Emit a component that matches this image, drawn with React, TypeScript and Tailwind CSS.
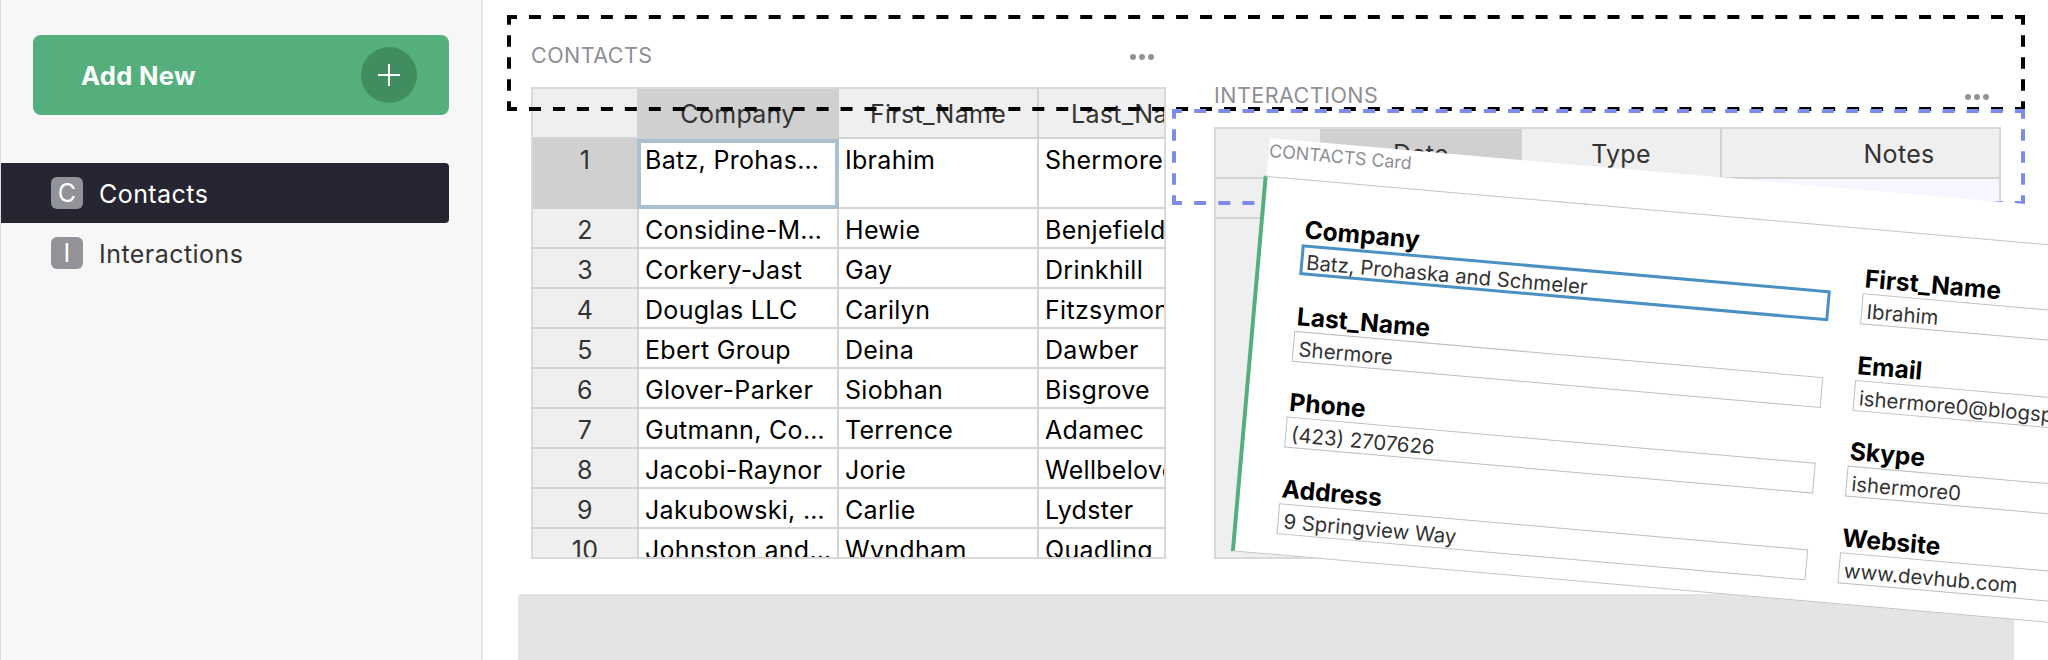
import React from "react";

type Contact = [string, string, string];

const contacts: Contact[] = [
  ["Batz, Prohas…", "Ibrahim", "Shermore"],
  ["Considine-M…", "Hewie", "Benjefield"],
  ["Corkery-Jast", "Gay", "Drinkhill"],
  ["Douglas LLC", "Carilyn", "Fitzsymons"],
  ["Ebert Group", "Deina", "Dawber"],
  ["Glover-Parker", "Siobhan", "Bisgrove"],
  ["Gutmann, Co…", "Terrence", "Adamec"],
  ["Jacobi-Raynor", "Jorie", "Wellbelove"],
  ["Jakubowski, …", "Carlie", "Lydster"],
  ["Johnston and…", "Wyndham", "Quadling"],
];

const fields: [string, string][] = [
  ["Company", "Batz, Prohaska and Schmeler"],
  ["First_Name", "Ibrahim"],
  ["Last_Name", "Shermore"],
  ["Email", "ishermore0@blogspot.com"],
  ["Phone", "(423) 2707626"],
  ["Skype", "ishermore0"],
  ["Address", "9 Springview Way"],
  ["Website", "www.devhub.com"],
];

function Dots() {
  return (
    <svg className="mt-1" width="24" height="6" viewBox="0 0 24 6" fill="#929299">
      <circle cx="3" cy="3" r="3" />
      <circle cx="12" cy="3" r="3" />
      <circle cx="21" cy="3" r="3" />
    </svg>
  );
}

function DashedFrame({ width, color, gap, className }: { width: number; color: string; gap: number; className: string }) {
  const h = `12 ${gap}`;
  return (
    <svg className={className} width={width} height="96" viewBox={`0 0 ${width} 96`} stroke={color} strokeWidth="4" fill="none">
      <path d={`M0 2H${width}`} strokeDasharray={h} strokeDashoffset="2" />
      <path d={`M0 94H${width}`} strokeDasharray={h} strokeDashoffset="2" />
      <path d="M2 0V96" strokeDasharray="11.5 10.5" strokeDashoffset="1.7" />
      <path d={`M${width - 2} 0V96`} strokeDasharray="11.5 10.5" strokeDashoffset="1.7" />
    </svg>
  );
}

function Sidebar() {
  return (
    <aside className="flex h-full w-[483px] shrink-0 flex-col border-l border-r-2 border-l-[#dcdcdc] border-r-[#e6e6e6] bg-[#f7f7f7] pt-[35px]">
      <button className="ml-8 flex h-20 w-[416px] items-center justify-between rounded-lg bg-[#54af7d] pr-8 pl-[48px] text-white">
        <span className="pt-[2px] text-[25.5px] font-bold tracking-[0.35px]">Add New</span>
        <span className="flex size-14 items-center justify-center rounded-full bg-[#408e5f]">
          <svg width="22" height="22" viewBox="0 0 22 22" stroke="white" strokeWidth="2">
            <path d="M11 0V22M0 11H22" />
          </svg>
        </span>
      </button>
      <nav className="mt-12 flex flex-col text-[25px] tracking-[0.45px]">
        <a className="flex h-[60px] w-[448px] items-center rounded-r bg-[#262632] pl-[50px] text-white">
          <span className="flex size-8 items-center justify-center rounded-md bg-[#929299] pt-[2px]">C</span>
          <span className="pt-[3px] pl-4">Contacts</span>
        </a>
        <a className="flex h-[60px] w-[448px] items-center pl-[50px] text-[#333]">
          <span className="flex size-8 items-center justify-center rounded-md bg-[#929299] pt-[2px] text-white">I</span>
          <span className="pt-[3px] pl-4">Interactions</span>
        </a>
      </nav>
    </aside>
  );
}

function ContactsTable() {
  return (
    <section className="flex w-[635px] flex-col">
      <header className="flex h-[87px] items-center justify-between pt-[24px] pb-[1px] pr-[12px]">
        <h2 className="text-[21.5px] leading-8 tracking-[0.45px] text-[#8e8e95]">CONTACTS</h2>
        <Dots />
      </header>
      <div className="h-[472px] overflow-hidden border-2 border-[#d9d9d9] text-[25px] tracking-[0.3px]">
        <div className="grid w-[704px] grid-cols-[106px_200px_200px_198px]">
          <div className="h-[50px] border-r-2 border-b-2 border-[#d3d3d3] bg-[#efefef]" />
          <div className="h-[50px] border-r-2 border-b-2 border-[#d0d0d0] bg-[#d0d0d0] pt-px text-center leading-[48px] text-[#333]">Company</div>
          <div className="h-[50px] border-r-2 border-b-2 border-[#d3d3d3] bg-[#efefef] pt-px text-center leading-[48px] text-[#333]">First_Name</div>
          <div className="h-[50px] border-b-2 border-[#d3d3d3] bg-[#efefef] pt-px text-center leading-[48px] text-[#333]">Last_Name</div>
          {contacts.map(([company, first, last], i) => (
            <React.Fragment key={company}>
              <div
                className={
                  i === 0
                    ? "h-[70px] border-r-2 border-b-2 border-[#d0d0d0] bg-[#d0d0d0] text-center leading-[43px] text-[#333]"
                    : "h-10 border-r-2 border-b-2 border-[#d3d3d3] bg-[#efefef] text-center leading-[42px] text-[#333]"
                }
              >
                {i + 1}
              </div>
              <div
                className={
                  i === 0
                    ? "-ml-0.5 h-[70px] border-4 border-[#a9c0d1] pl-1 leading-[35px] whitespace-nowrap"
                    : "h-10 border-r-2 border-b-2 border-[#d3d3d3] pl-1.5 leading-[42px] whitespace-nowrap"
                }
              >
                {company}
              </div>
              <div className={i === 0 ? "h-[70px] border-r-2 border-b-2 border-[#d3d3d3] pl-1.5 leading-[43px]" : "h-10 border-r-2 border-b-2 border-[#d3d3d3] pl-1.5 leading-[42px]"}>
                {first}
              </div>
              <div className={i === 0 ? "h-[70px] border-b-2 border-[#d3d3d3] pl-1.5 leading-[43px]" : "h-10 border-b-2 border-[#d3d3d3] pl-1.5 leading-[42px]"}>
                {last}
              </div>
            </React.Fragment>
          ))}
        </div>
      </div>
    </section>
  );
}

function InteractionsTable() {
  return (
    <section className="flex w-[787px] flex-col">
      <header className="flex h-[127px] items-center justify-between pt-[64px] pb-[1px] pr-[12px]">
        <h2 className="text-[21.5px] leading-8 tracking-[0.48px] text-[#8e8e95]">INTERACTIONS</h2>
        <Dots />
      </header>
      <div className="h-[432px] overflow-hidden border-2 border-[#d9d9d9] bg-[#efefef] text-[25px] tracking-[0.3px] text-[#333]">
        <div className="grid w-[860px] grid-cols-[104px_202px_200px_354px] text-center leading-[50px]">
          <div className="h-[50px] border-b-2 border-[#d3d3d3]" />
          <div className="h-[50px] bg-[#d0d0d0]">Date</div>
          <div className="h-[50px] border-r-2 border-b-2 border-[#d3d3d3]">Type</div>
          <div className="h-[50px] border-b-2 border-[#d3d3d3]">Notes</div>
          <div className="h-10 border-b-2 border-[#d3d3d3]" />
          <div className="h-10 border-b-2 border-[#d3d3d3] bg-[#f5f6ff]" />
          <div className="h-10 border-b-2 border-[#d3d3d3] bg-[#f5f6ff]" />
          <div className="h-10 border-b-2 border-[#d3d3d3] bg-[#f5f6ff]" />
        </div>
      </div>
    </section>
  );
}

function DraggedCard() {
  return (
    <div className="absolute top-[138px] left-[1270.4px] w-[1180px] origin-top-left rotate-[5deg]">
      <div className="h-[38px] bg-white pt-px pl-[0.5px] text-[17.8px] leading-6 text-[#8e8e95]">CONTACTS Card</div>
      <div className="-ml-[3px] h-[377px] border-y border-l-4 border-y-[#c4c4c4] border-l-[#54af7d] bg-white">
        <div className="grid grid-cols-[530.5px_530px] gap-x-8 pt-[34px] pl-10">
          {fields.map(([label, value], i) => (
            <div key={label} className="h-[86.5px]">
              <div className="h-[30px] pl-[1.5px] text-[24.6px] leading-[30px] font-bold text-black">{label}</div>
              <div
                className={
                  i === 0
                    ? "h-[31px] border-[3px] border-[#4a90c2] pl-[3px] text-[20.4px] leading-[30px] text-[#333]"
                    : "h-[31px] border border-[#bfbfbf] pl-[5px] text-[20.4px] leading-[34px] text-[#333]"
                }
              >
                {value}
              </div>
            </div>
          ))}
        </div>
      </div>
    </div>
  );
}

export default function App() {
  return (
    <div className="relative flex h-[660px] w-[2048px] overflow-hidden bg-white font-['Inter',sans-serif] text-black">
      <Sidebar />
      <main className="flex flex-1 flex-col">
        <div className="ml-12 flex gap-12">
          <ContactsTable />
          <InteractionsTable />
        </div>
        <div className="mt-[35px] ml-[35px] w-[1496px] flex-1 rounded-t bg-[#e4e4e4]" />
      </main>
      <DashedFrame width={1518} color="#000000" gap={11.968} className="absolute top-[15px] left-[507px]" />
      <DashedFrame width={853} color="#7d8cec" gap={12.14} className="absolute top-[109px] left-[1172px]" />
      <DraggedCard />
    </div>
  );
}
